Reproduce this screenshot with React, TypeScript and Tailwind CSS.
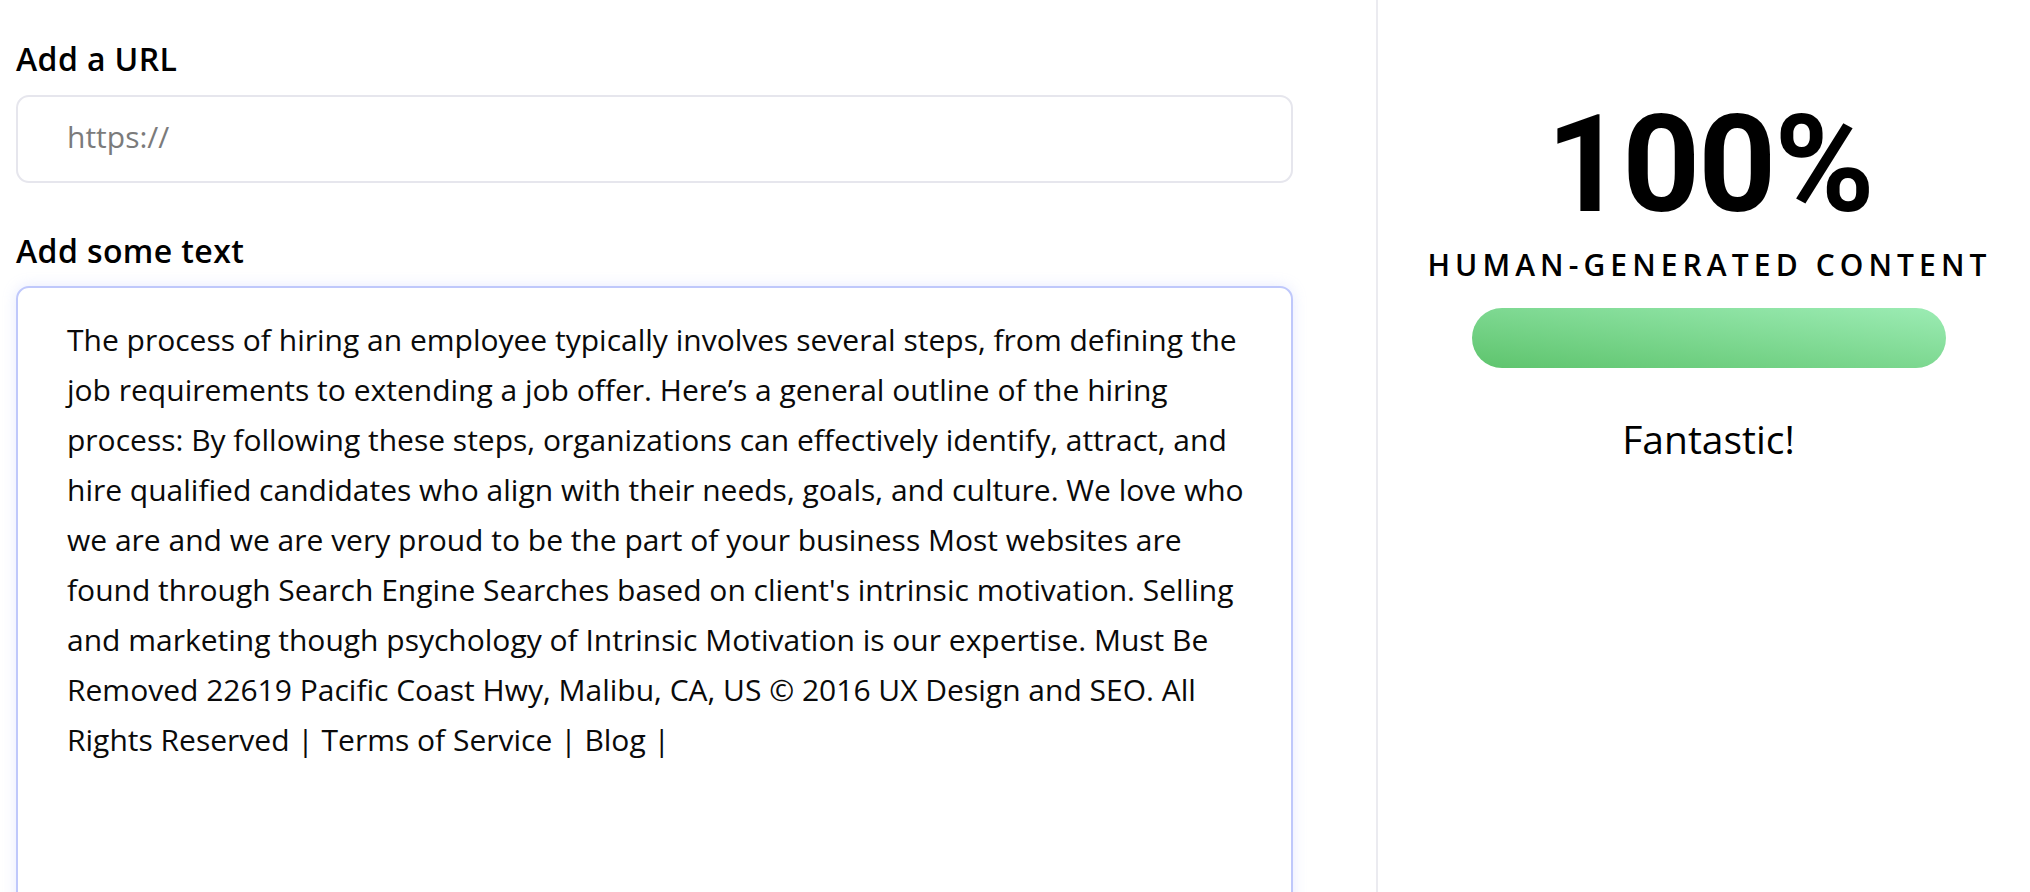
import React from "react";

const BODY =
  "The process of hiring an employee typically involves several steps, from defining the job requirements to extending a job offer. Here’s a general outline of the hiring process: By following these steps, organizations can effectively identify, attract, and hire qualified candidates who align with their needs, goals, and culture. We love who we are and we are very proud to be the part of your business Most websites are found through Search Engine Searches based on client's intrinsic motivation. Selling and marketing though psychology of Intrinsic Motivation is our expertise. Must Be Removed 22619 Pacific Coast Hwy, Malibu, CA, US © 2016 UX Design and SEO. All Rights Reserved | Terms of Service | Blog |";

export default function App() {
  return (
    <div className="flex h-screen w-full overflow-hidden bg-white text-[#0a0a0a] font-['Open_Sans',sans-serif]">
      {/* Left column */}
      <div className="w-[1376px] shrink-0 pl-[16px] pr-[83px] pt-[39px]">
        <label className="block text-[32px] leading-[40px] font-[550] tracking-[0.4px] text-black">
          Add a URL
        </label>
        <input
          type="text"
          placeholder="https://"
          className="mt-[16px] block h-[88px] w-full rounded-[13px] border-2 border-[#e6e6ed] bg-white pl-[49px] pb-[6px] text-[30px] text-[#111] outline-none placeholder:text-[#7b7b7b]"
        />
        <label className="mt-[48px] block text-[32px] leading-[40px] font-[550] tracking-[0.4px] text-black">
          Add some text
        </label>
        <textarea
          defaultValue={BODY}
          className="mt-[15px] block h-[640px] w-full resize-none overflow-hidden rounded-[13px] border-2 border-[#bfc8fb] bg-white pl-[49px] pr-[32px] pt-[27px] text-[30px] leading-[50px] text-[#0a0a0a] outline-none shadow-[0_0_14px_rgba(165,180,252,0.28)]"
        />
      </div>

      {/* Divider */}
      <div className="w-[2px] shrink-0 bg-[#ebebf0]" />

      {/* Right panel */}
      <div className="flex flex-1 flex-col items-center pl-[9px] pt-[97px]">
        <div className="font-['Roboto',sans-serif] text-[136px] font-bold leading-[136px] tracking-[-2px] text-black pl-[2px]">
          100%
        </div>
        <div className="mt-[14px] text-[30px] font-semibold leading-[36px] tracking-[5.1px] text-black pl-[2px]">
          HUMAN-GENERATED CONTENT
        </div>
        <div className="mt-[25px] h-[60px] w-[474px] rounded-full bg-[linear-gradient(to_top_right,#5ec46d,#9cecb4)]" />
        <div className="mt-[48px] text-[39px] leading-[46px] font-normal text-black">
          Fantastic!
        </div>
      </div>
    </div>
  );
}
